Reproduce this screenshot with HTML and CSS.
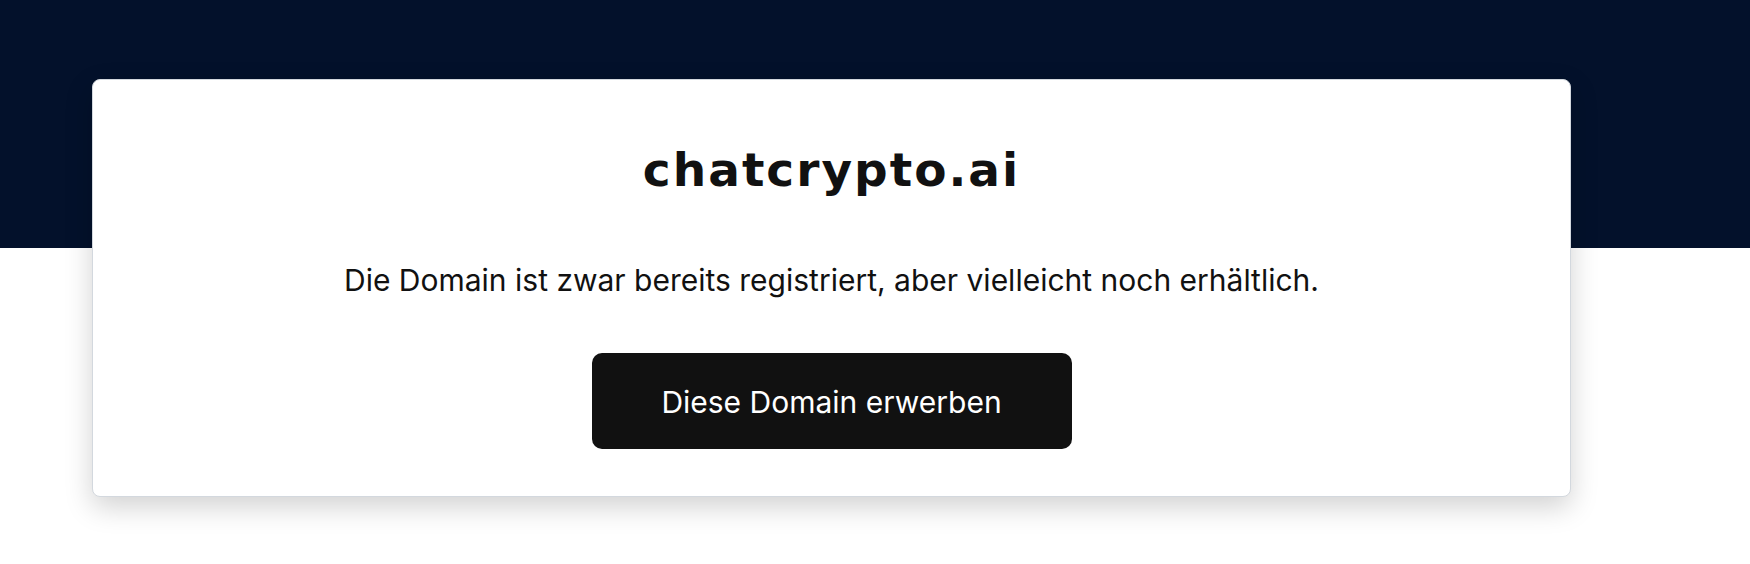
FILE: index.html
```html
<!DOCTYPE html>
<html lang="de">
<head>
    <meta charset="UTF-8">
    <title>chatcrypto.ai</title>
    <link rel="stylesheet" href="styles.css">
</head>
<body>
<main class="page">
    <section class="card">
        <h1 class="domain">chatcrypto.ai</h1>
        <p class="lead">Die Domain ist zwar bereits registriert, aber vielleicht noch erhältlich.</p>
        <a class="buy" href="#">Diese Domain erwerben</a>
    </section>
</main>
</body>
</html>
```
FILE: styles.css
```css
html {
    box-sizing: border-box;
    margin: 0;
    padding: 0;
}

*, *:before, *:after {
    box-sizing: inherit;
}

body {
    margin: 0;
    min-height: 564px;
    font-family: 'Inter', 'Open Sans', sans-serif;
    color: #111;
    background: linear-gradient(#03112b 0, #03112b 248px, #fff 248px);
}

.page {
    padding: 79px 179px 0 92px;
}

.card {
    display: flex;
    flex-direction: column;
    align-items: center;
    height: 418px;
    padding: 54px 40px 0;
    background: #fff;
    border: 1px solid #d3d8de;
    border-radius: 8px;
    box-shadow: 0 10px 28px rgba(0, 0, 0, 0.18);
}

.domain {
    margin: 0;
    font-family: 'DejaVu Sans', 'Inter', sans-serif;
    font-size: 47px;
    line-height: 72px;
    font-weight: 700;
    letter-spacing: 2px;
}

.lead {
    margin: 54px 0 0;
    font-size: 30px;
    line-height: 40px;
}

.buy {
    display: flex;
    align-items: center;
    justify-content: center;
    width: 480px;
    height: 96px;
    margin-top: 53px;
    padding-top: 2px;
    border-radius: 10px;
    background: #111;
    color: #fff;
    font-size: 30px;
    text-decoration: none;
}
```
